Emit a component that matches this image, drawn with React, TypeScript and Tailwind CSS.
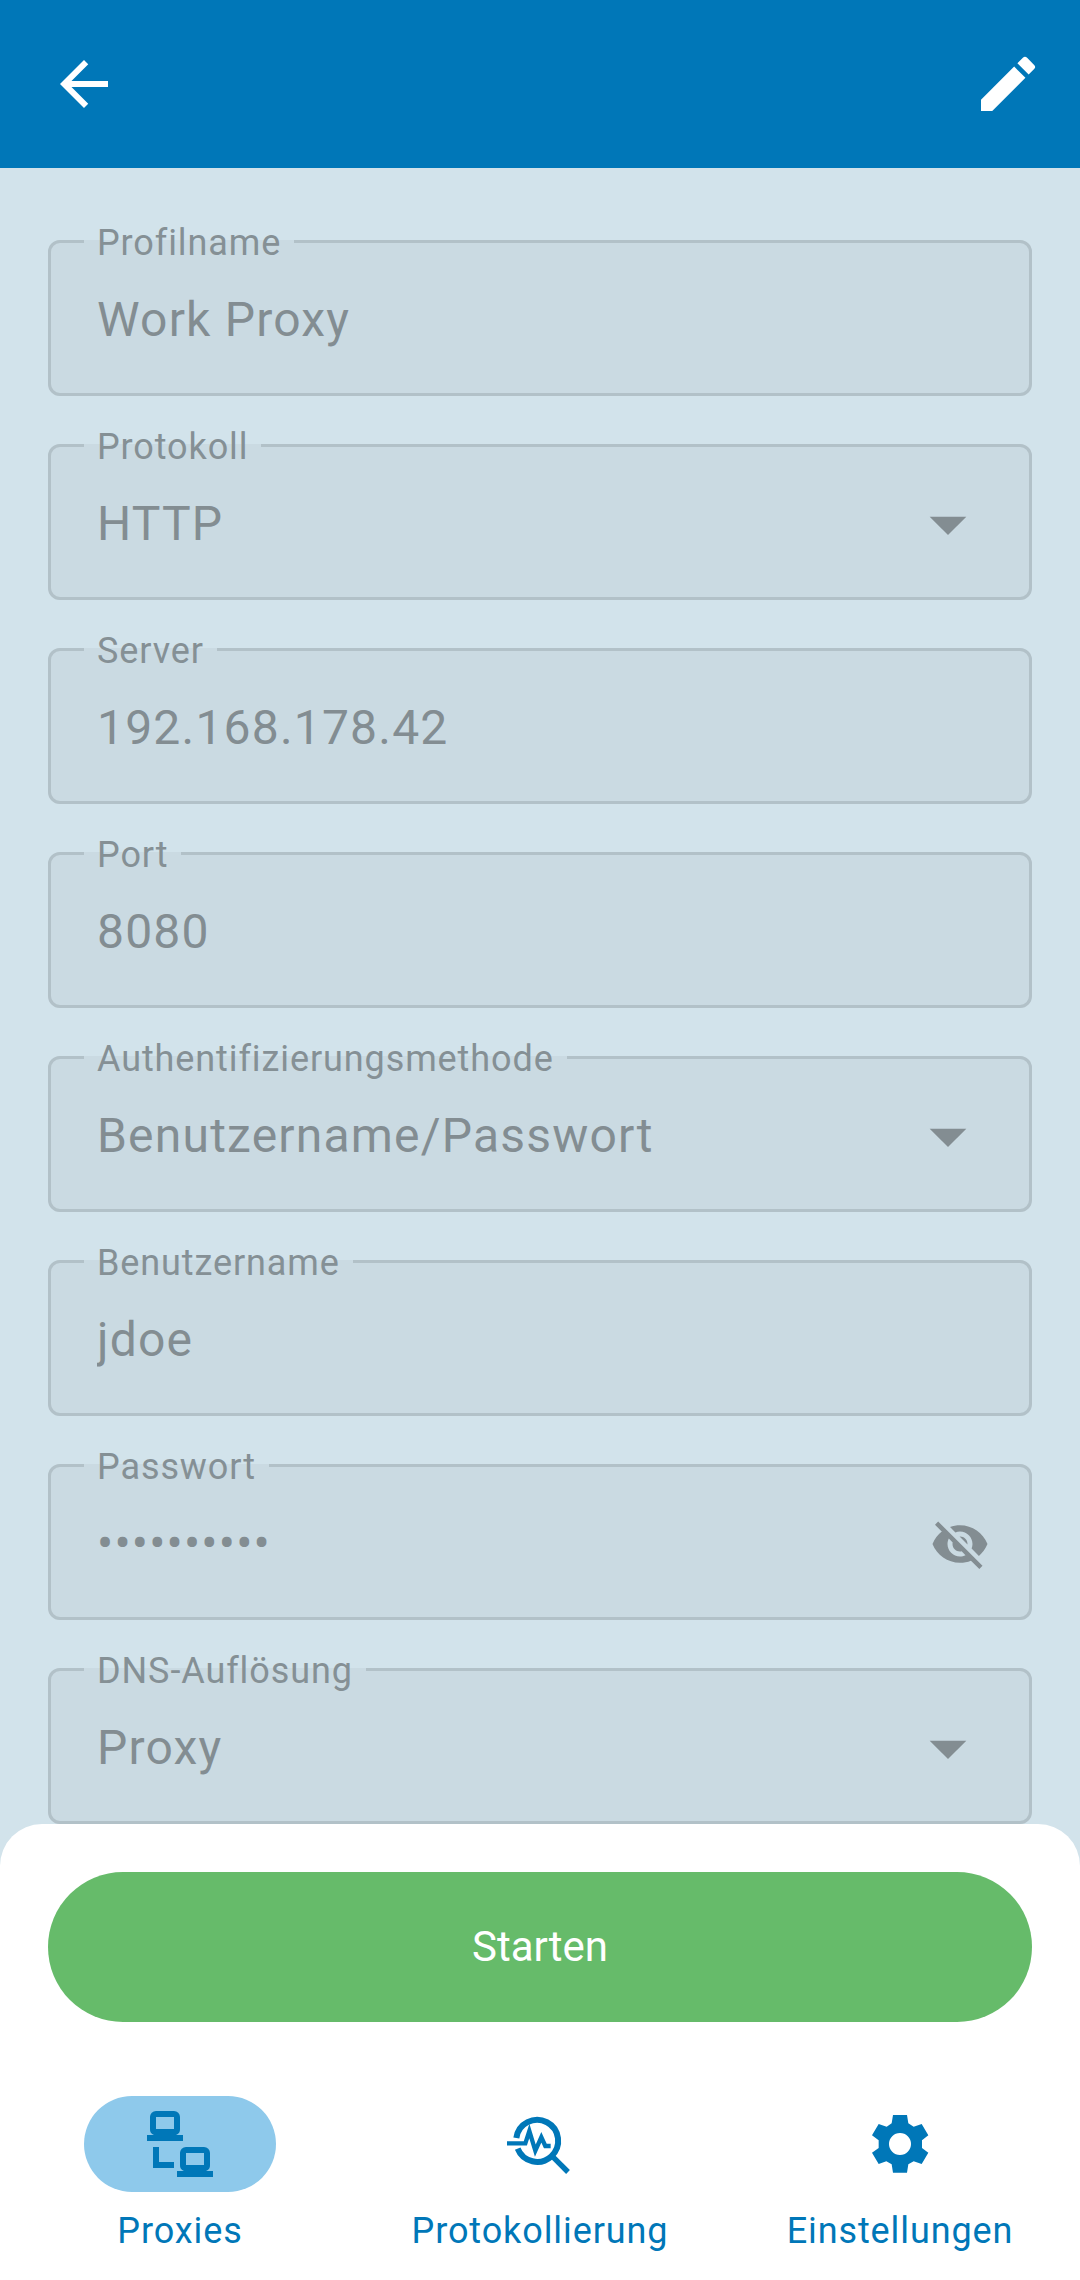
import { useState } from 'react';
import type { ReactNode } from 'react';
import { MdArrowBack, MdArrowDropDown, MdEdit, MdVisibility, MdVisibilityOff } from 'react-icons/md';

const controlClass =
  'min-w-0 flex-1 h-full px-[13px] bg-transparent appearance-none outline-none text-[48px] leading-[60px] tracking-wide text-[#838d92] disabled:opacity-100';

interface FieldProps {
  id: string;
  label: string;
  children: ReactNode;
}

function Field({ id, label, children }: FieldProps) {
  return (
    <fieldset className="min-w-0 px-[33px] border-[3px] border-[#b2c1c8] rounded-xl bg-[#cadae2]">
      <legend className="px-[13px] pt-[3px] text-[36px] leading-[42px] tracking-wide text-[#859095]">
        <label htmlFor={id}>{label}</label>
      </legend>
      <div className="flex items-center h-[111px] mb-[18px] text-[#838d92]">{children}</div>
    </fieldset>
  );
}

interface TextFieldProps {
  id: string;
  label: string;
  initial: string;
  disabled: boolean;
}

function TextField({ id, label, initial, disabled }: TextFieldProps) {
  const [value, setValue] = useState(initial);

  return (
    <Field id={id} label={label}>
      <input
        id={id}
        type="text"
        value={value}
        disabled={disabled}
        onChange={(e) => setValue(e.target.value)}
        className={controlClass}
      />
    </Field>
  );
}

function PasswordField({ id, label, initial, disabled }: TextFieldProps) {
  const [value, setValue] = useState(initial);
  const [visible, setVisible] = useState(false);

  return (
    <Field id={id} label={label}>
      <input
        id={id}
        type={visible ? 'text' : 'password'}
        value={value}
        disabled={disabled}
        onChange={(e) => setValue(e.target.value)}
        className={controlClass}
      />
      <button
        type="button"
        aria-label="Passwort anzeigen"
        disabled={disabled}
        onClick={() => setVisible(!visible)}
        className="mr-1 shrink-0 px-0.5"
      >
        {visible ? <MdVisibility className="size-[60px]" /> : <MdVisibilityOff className="size-[60px]" />}
      </button>
    </Field>
  );
}

interface SelectFieldProps extends TextFieldProps {
  options: string[];
}

function SelectField({ id, label, initial, options, disabled }: SelectFieldProps) {
  const [value, setValue] = useState(initial);

  return (
    <Field id={id} label={label}>
      <select
        id={id}
        value={value}
        disabled={disabled}
        onChange={(e) => setValue(e.target.value)}
        className={controlClass}
      >
        {options.map((option) => (
          <option key={option}>{option}</option>
        ))}
      </select>
      <MdArrowDropDown className="mr-1 size-[88px] shrink-0 pointer-events-none" />
    </Field>
  );
}

function ProxiesIcon() {
  return (
    <svg viewBox="0 0 66 66" className="size-[66px]" fill="currentColor" aria-hidden="true">
      <path fillRule="evenodd" d="M9 0h18a6 6 0 0 1 6 6v12a6 6 0 0 1-4 6h7v6H0v-6h7a6 6 0 0 1-4-6V6a6 6 0 0 1 6-6zM9 6v12h18V6z" />
      <path fillRule="evenodd" d="M39 36h18a6 6 0 0 1 6 6v12a6 6 0 0 1-4 6h7v6H30v-6h7a6 6 0 0 1-4-6V42a6 6 0 0 1 6-6zM39 42v12h18V42z" />
      <path d="M6 36h6v15h15v6H6z" />
    </svg>
  );
}

function LoggingIcon() {
  return (
    <svg viewBox="0 0 198 198" className="size-[66px]" fill="none" stroke="currentColor" aria-hidden="true">
      <path strokeWidth="18" d="M28 81a63 63 0 1 1 4 32" />
      <path strokeWidth="13" d="M0 97h55l12-37 18 59 18-40 12 26h16" />
      <path strokeWidth="16" d="M137 137l46 46" />
    </svg>
  );
}

function SettingsIcon() {
  return (
    <svg viewBox="0 0 198 198" className="size-[66px]" fill="currentColor" aria-hidden="true">
      <path
        fillRule="evenodd"
        d="M78 12h42l4 25 16 10 24-8 20 34-19 15v23l19 14-20 34-24-8-16 9-4 25H78l-4-25-16-9-23 8-20-34 20-14V88L15 73l20-34 24 8 15-10zM99 66a33 33 0 1 0 0 66 33 33 0 0 0 0-66z"
      />
    </svg>
  );
}

const tabs = [
  { id: 'proxies', label: 'Proxies', Icon: ProxiesIcon },
  { id: 'logging', label: 'Protokollierung', Icon: LoggingIcon },
  { id: 'settings', label: 'Einstellungen', Icon: SettingsIcon },
];

export default function App() {
  const [editing, setEditing] = useState(false);
  const [activeTab, setActiveTab] = useState('proxies');
  const disabled = !editing;

  return (
    <div className="min-h-screen flex flex-col bg-[#d2e3eb] font-[Roboto,sans-serif]">
      <header className="flex items-center justify-between h-[168px] pl-12 pr-9 bg-[#0077b8] text-white">
        <button type="button" aria-label="Zurück">
          <MdArrowBack className="size-[72px]" />
        </button>
        <button type="button" aria-label="Bearbeiten" onClick={() => setEditing(!editing)}>
          <MdEdit className="size-[72px]" />
        </button>
      </header>

      <main className="flex-1 flex flex-col gap-[27px] px-12 pt-[51px]">
        <TextField id="name" label="Profilname" initial="Work Proxy" disabled={disabled} />
        <SelectField id="protocol" label="Protokoll" initial="HTTP" options={['HTTP', 'SOCKS5']} disabled={disabled} />
        <TextField id="server" label="Server" initial="192.168.178.42" disabled={disabled} />
        <TextField id="port" label="Port" initial="8080" disabled={disabled} />
        <SelectField
          id="auth"
          label="Authentifizierungsmethode"
          initial="Benutzername/Passwort"
          options={['Keine', 'Benutzername/Passwort']}
          disabled={disabled}
        />
        <TextField id="user" label="Benutzername" initial="jdoe" disabled={disabled} />
        <PasswordField id="password" label="Passwort" initial="geheim1234" disabled={disabled} />
        <SelectField id="dns" label="DNS-Auflösung" initial="Proxy" options={['Proxy', 'Lokal']} disabled={disabled} />
      </main>

      <footer className="pt-12 pb-[25px] rounded-t-[42px] bg-white">
        <div className="px-12">
          <button type="button" className="w-full h-[150px] rounded-full bg-[#66bb6a] text-[42px] leading-[60px] text-white">
            Starten
          </button>
        </div>
        <nav className="grid grid-cols-3 mt-[74px] text-[#0077b8]">
          {tabs.map(({ id, label, Icon }) => (
            <a key={id} href={`#${id}`} onClick={() => setActiveTab(id)} className="flex flex-col items-center gap-[15px]">
              <span
                className={`flex items-center justify-center w-48 h-24 rounded-full ${
                  activeTab === id ? 'bg-[#8ec9eb]' : ''
                }`}
              >
                <Icon />
              </span>
              <span className="text-[36px] leading-[48px] tracking-wide">{label}</span>
            </a>
          ))}
        </nav>
      </footer>
    </div>
  );
}
